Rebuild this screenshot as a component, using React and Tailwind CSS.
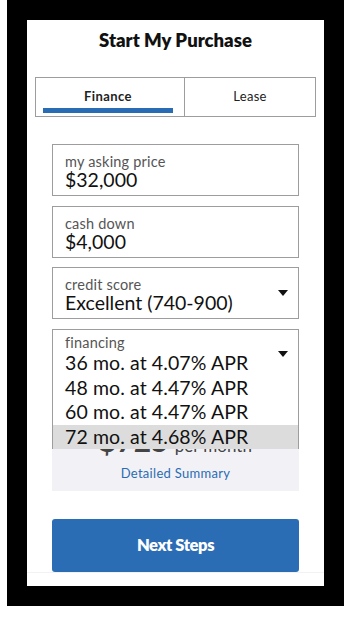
import React from "react";

const font = { fontFamily: "Lato, 'Noto Sans', 'Liberation Sans', sans-serif" };

function Caret() {
  return (
    <svg width="10" height="6" viewBox="0 0 10 6" className="block">
      <path d="M0 0 H10 L5 6 Z" fill="#111" />
    </svg>
  );
}

function Field({ label, value, caret }) {
  return (
    <div className="relative h-[52px] border border-[#9d9d9d] bg-white pl-[12px] pt-[9px]">
      <div className="text-[14.5px] leading-[15px] text-[#555] tracking-[0.2px]">{label}</div>
      <div className="text-[19.5px] leading-[21px] text-[#111]">{value}</div>
      {caret && (
        <div className="absolute right-[10px] top-[22px]">
          <Caret />
        </div>
      )}
    </div>
  );
}

export default function App() {
  const options = [
    "36 mo. at 4.07% APR",
    "48 mo. at 4.47% APR",
    "60 mo. at 4.47% APR",
    "72 mo. at 4.68% APR",
  ];
  return (
    <div className="w-[350px] h-[624px] bg-white pl-[7px]" style={font}>
      <div className="w-[337px] h-[606px] bg-black p-[20px]">
        <div className="w-[297px] h-[566px] bg-white flex flex-col">
          <div className="pt-[9px] h-[31px] text-center text-[18.5px] leading-[22px] font-extrabold text-[#111]">
            Start My Purchase
          </div>

          <div className="mt-[26px] mx-[8px] h-[40px] border border-[#9d9d9d] flex">
            <div className="w-[149px] border-r border-[#9d9d9d] pl-[7px] pr-[11px] pt-[10px] flex flex-col items-center">
              <div className="text-[13px] leading-[16px] font-bold text-[#222] tracking-[0.4px]">Finance</div>
              <div className="mt-[4px] h-[5px] w-full bg-[#2a6cb3]" />
            </div>
            <div className="flex-1 pt-[10px] text-center text-[13px] leading-[16px] text-[#222] tracking-[0.3px]">
              Lease
            </div>
          </div>

          <div className="mx-[25px] flex flex-col">
            <div className="mt-[27px]">
              <Field label="my asking price" value="$32,000" />
            </div>
            <div className="mt-[10px]">
              <Field label="cash down" value="$4,000" />
            </div>
            <div className="mt-[9px]">
              <Field label="credit score" value="Excellent (740-900)" caret />
            </div>
            <div className="mt-[10px] relative h-[51px]">
              <div className="absolute left-0 right-0 top-0 z-10 h-[120px] border border-[#9d9d9d] bg-white">
                <div className="pl-[12px] pt-[5px] h-[21px] text-[14.5px] leading-[16px] text-[#555] tracking-[0.2px]">
                  financing
                </div>
                {options.map((o, i) => (
                  <div
                    key={o}
                    className={
                      "pl-[12px] h-[24.5px] text-[19.5px] leading-[24px] text-[#111] tracking-[0.1px] " +
                      (i === 3 ? "bg-[#dcdcdc]" : "")
                    }
                  >
                    {o}
                  </div>
                ))}
                <div className="absolute right-[10px] top-[21px]">
                  <Caret />
                </div>
              </div>
            </div>
            <div className="mt-[10px] h-[101px] bg-[#f2f2f6] flex flex-col justify-end items-center pb-[9px]">
              <div className="flex items-baseline gap-[6px] mb-[8px]">
                <span className="text-[30px] leading-[28px] font-bold text-[#444]">$725</span>
                <span className="text-[17px] leading-[20px] text-[#444]">per month</span>
              </div>
              <div className="text-[13px] leading-[18px] text-[#2a6cb3] tracking-[0.3px]">Detailed Summary</div>
            </div>
            <div className="mt-[28px] h-[53px] rounded-[3px] bg-[#2b6db5] flex items-center justify-center">
              <span className="text-[16.5px] font-extrabold text-white tracking-[-0.4px]">Next Steps</span>
            </div>
          </div>
          <div className="h-px bg-[#f2f2f2]" />
        </div>
      </div>
    </div>
  );
}
